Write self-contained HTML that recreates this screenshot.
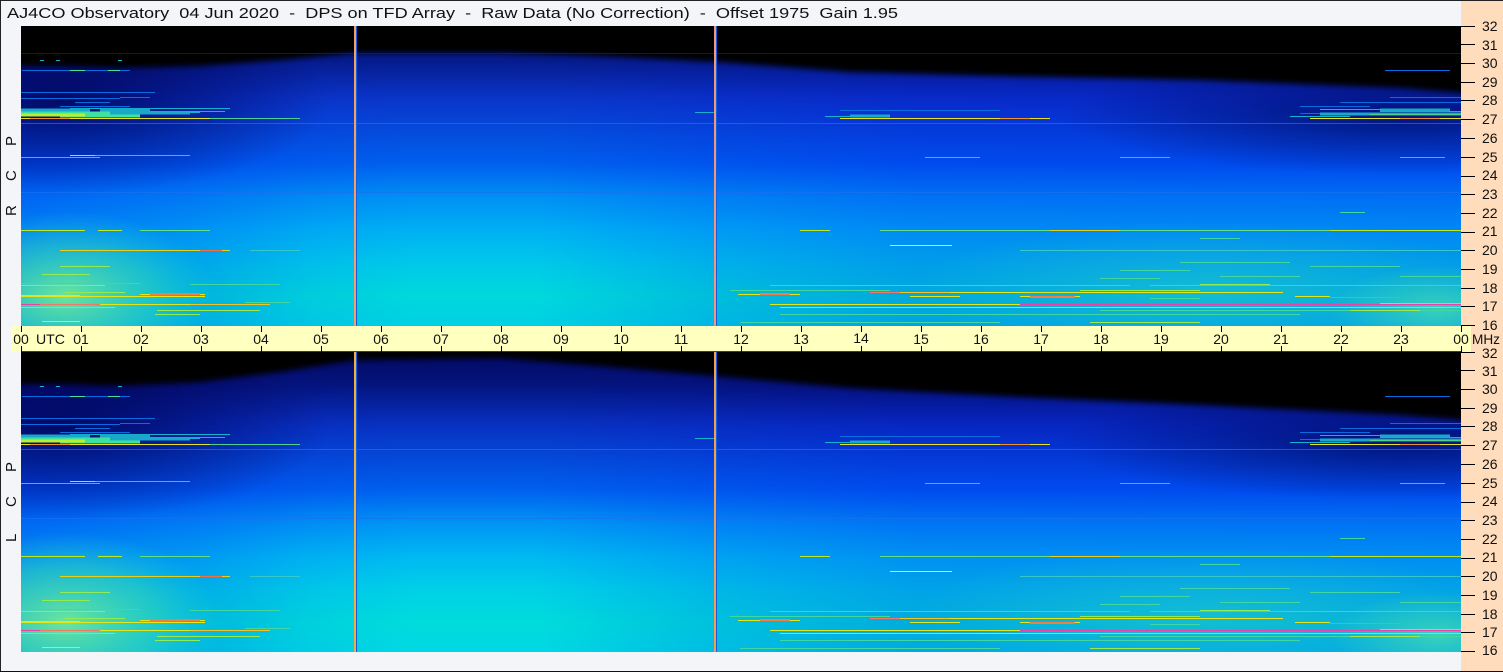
<!DOCTYPE html>
<html><head><meta charset="utf-8"><title>AJ4CO Observatory</title>
<style>
html,body{margin:0;padding:0;background:#f4f5f8;width:1503px;height:672px;overflow:hidden}
svg{display:block}
text{font-family:"Liberation Sans","DejaVu Sans",sans-serif;font-size:14px;fill:#111;white-space:pre}
.mul{mix-blend-mode:multiply}
</style></head><body>
<svg width="1503" height="672" viewBox="0 0 1503 672" xmlns="http://www.w3.org/2000/svg">
<defs>
<linearGradient id="v1" x1="0" y1="0" x2="0" y2="1">
<stop offset="0" stop-color="#030a70"/><stop offset=".11" stop-color="#051a8a"/><stop offset=".24" stop-color="#0a35c8"/><stop offset=".46" stop-color="#0060ee"/><stop offset=".57" stop-color="#0090f4"/><stop offset=".68" stop-color="#00b0f4"/><stop offset=".79" stop-color="#00c8ea"/><stop offset=".9" stop-color="#00d8dc"/><stop offset="1" stop-color="#00d0e4"/>
</linearGradient>
<linearGradient id="v2" x1="0" y1="0" x2="0" y2="1">
<stop offset="0" stop-color="#020860"/><stop offset=".11" stop-color="#04147e"/><stop offset=".24" stop-color="#0830c0"/><stop offset=".46" stop-color="#0060ee"/><stop offset=".57" stop-color="#0094f4"/><stop offset=".68" stop-color="#00b8f2"/><stop offset=".79" stop-color="#00d0e8"/><stop offset=".9" stop-color="#00dcdc"/><stop offset="1" stop-color="#00d8e4"/>
</linearGradient>
<linearGradient id="h" x1="0" y1="0" x2="1" y2="0">
<stop offset="0" stop-color="#b0b4ff"/><stop offset=".12" stop-color="#d0d4ff"/><stop offset=".2" stop-color="#f0f2ff"/><stop offset=".27" stop-color="#fff"/><stop offset=".36" stop-color="#fff"/><stop offset=".48" stop-color="#e0e0ff"/><stop offset=".62" stop-color="#c8c8ff"/><stop offset="1" stop-color="#c4c4ff"/>
</linearGradient>
<radialGradient id="gl1" gradientUnits="userSpaceOnUse" cx="0" cy="0" r="1" gradientTransform="translate(65,296) scale(150,85)"><stop offset="0" stop-color="#80f090" stop-opacity=".85"/><stop offset=".6" stop-color="#40e8b0" stop-opacity=".4"/><stop offset="1" stop-color="#20e0d0" stop-opacity="0"/></radialGradient>
<radialGradient id="gl2" gradientUnits="userSpaceOnUse" cx="0" cy="0" r="1" gradientTransform="translate(65,622) scale(160,90)"><stop offset="0" stop-color="#80f090" stop-opacity=".85"/><stop offset=".6" stop-color="#40e8b0" stop-opacity=".45"/><stop offset="1" stop-color="#20e0d0" stop-opacity="0"/></radialGradient>
<radialGradient id="gr1" gradientUnits="userSpaceOnUse" cx="0" cy="0" r="1" gradientTransform="translate(1210,290) scale(300,70)"><stop offset="0" stop-color="#30e0c0" stop-opacity=".38"/><stop offset="1" stop-color="#30e0c0" stop-opacity="0"/></radialGradient>
<radialGradient id="gr2" gradientUnits="userSpaceOnUse" cx="0" cy="0" r="1" gradientTransform="translate(1210,616) scale(300,70)"><stop offset="0" stop-color="#30e0c0" stop-opacity=".38"/><stop offset="1" stop-color="#30e0c0" stop-opacity="0"/></radialGradient>
<radialGradient id="grr1" gradientUnits="userSpaceOnUse" cx="0" cy="0" r="1" gradientTransform="translate(1440,310) scale(110,45)"><stop offset="0" stop-color="#60f0a0" stop-opacity=".55"/><stop offset="1" stop-color="#60f0a0" stop-opacity="0"/></radialGradient>
<radialGradient id="grr2" gradientUnits="userSpaceOnUse" cx="0" cy="0" r="1" gradientTransform="translate(1440,636) scale(110,45)"><stop offset="0" stop-color="#60f0a0" stop-opacity=".55"/><stop offset="1" stop-color="#60f0a0" stop-opacity="0"/></radialGradient>
<radialGradient id="dl1" gradientUnits="userSpaceOnUse" cx="0" cy="0" r="1" gradientTransform="translate(60,100) scale(270,95)"><stop offset="0" stop-color="#000040" stop-opacity=".72"/><stop offset="1" stop-color="#000040" stop-opacity="0"/></radialGradient>
<radialGradient id="dl2" gradientUnits="userSpaceOnUse" cx="0" cy="0" r="1" gradientTransform="translate(60,426) scale(270,95)"><stop offset="0" stop-color="#000040" stop-opacity=".72"/><stop offset="1" stop-color="#000040" stop-opacity="0"/></radialGradient>
<radialGradient id="dr1" gradientUnits="userSpaceOnUse" cx="0" cy="0" r="1" gradientTransform="translate(1400,115) scale(340,60)"><stop offset="0" stop-color="#000040" stop-opacity=".6"/><stop offset="1" stop-color="#000040" stop-opacity="0"/></radialGradient>
<radialGradient id="dr2" gradientUnits="userSpaceOnUse" cx="0" cy="0" r="1" gradientTransform="translate(1400,441) scale(340,60)"><stop offset="0" stop-color="#000040" stop-opacity=".6"/><stop offset="1" stop-color="#000040" stop-opacity="0"/></radialGradient>
<filter id="b" x="-2%" y="-10%" width="104%" height="120%"><feGaussianBlur stdDeviation="3"/></filter>
<g id="lines" fill="none" stroke-width="1" shape-rendering="crispEdges">
<path stroke="#1a70f0" opacity=".7" d="M21 97.5H1461M21 166.5H1461"/>
<path stroke="#0a6ae0" d="M22 44.5H130M21 66.5H155M21 72.5H120M60 80.5H130M75 76.5H110M120 71.5H150M1340 76.5H1461M1300 80.5H1370M1390 71.5H1461M30 87.5H70M840 84.5H1000M1300 87.5H1461M1385 44.5H1450"/>
<path stroke="#18b0d0" d="M40 34.5H44M56 34.5H60M118 34.5H122M70 82.5H230M90 86.5H200M150 85.5H225M825 90.5H890M1320 83.5H1440M1290 90.5H1350M1380 85.5H1461M695 86.5H714"/>
<path stroke="#40e0a0" d="M70 44.5H85M108 44.5H120"/>
<path stroke="#18a8c8" stroke-width="3" d="M21 84H90M95 87H190M100 84H150M1320 88H1461M1380 84H1450M850 90H890"/>
<path stroke="#40e0a0" stroke-width="3" d="M21 87H110M60 90H140"/>
<path stroke="#b8f030" stroke-width="3" d="M21 89H85"/>
<path stroke="#e8e020" d="M21 92.5H210M840 92.5H1050M1310 92.5H1461"/>
<path stroke="#50d090" d="M210 92.5H300M1370 88.5H1461"/>
<path stroke="#f09030" d="M30 92.5H70M1000 92.5H1030M1400 92.5H1440"/>
<path stroke="#20d0b0" d="M21 131.5H100M70 129.5H190M925 131.5H980M1120 131.5H1170M1400 131.5H1445"/>
<path stroke="#c0e820" d="M70 129.5H95M21 204.5H85M98 204.5H122M800 204.5H830M1330 204.5H1461"/>
<path stroke="#60e080" d="M140 204.5H210M880 204.5H1330"/>
<path stroke="#e8d018" d="M60 224.5H230M1050 204.5H1120"/>
<path stroke="#f07040" d="M200 224.5H222"/>
<path stroke="#38c8c8" d="M1020 224.5H1461M250 224.5H300"/>
<path stroke="#a0f0f0" d="M890 219.5H952"/>
<path stroke="#40d8a0" d="M770 259.5H1130M1150 259.5H1461M730 264.5H890M21 257.5H140M190 258.5H280M245 276.5H290M780 288.5H1300M740 296.5H1000M1100 284.5H1461M1200 212.5H1240M1180 236.5H1290M1120 244.5H1190M1310 240.5H1400M1220 250.5H1300M1340 186.5H1365M1100 252.5H1160M1400 250.5H1461M1150 272.5H1200"/>
<path stroke="#90ec50" d="M21 259.5H105M65 266.5H125M155 288.5H200M1200 258.5H1270M21 281.5H115M1380 277.5H1461M1080 264.5H1200M42 248.5H90M60 240.5H110"/>
<path stroke="#e4e418" stroke-width="2" d="M21 270H80"/>
<path stroke="#e4e418" d="M140 268.5H205M870 266.5H1283M80 270.5H205M738 268.5H800M910 270.5H960M1020 270.5H1080M42 295.5H80M100 278.5H270M1295 270.5H1330M770 278.5H1461M222 284.5H245"/>
<path stroke="#f08040" stroke-width="2" d="M150 268H200M760 268H790M1030 271H1075"/>
<path stroke="#f8c020" d="M190 278.5H270M880 266.5H950"/>
<path stroke="#f040a8" d="M21 278.5H40M1020 278.5H1461"/>
<path stroke="#f07868" d="M40 278.5H100M870 266.5H900M1330 271.5H1400"/>
<path stroke="#a0e848" d="M780 281.5H1461M157 284.5H260M1350 284.5H1420M1090 296.5H1200"/>
</g>
</defs>

<rect width="1503" height="672" fill="#f4f5f8"/>
<rect x="1461" y="0" width="42" height="672" fill="#fedcbc"/>

<!-- panel 1 -->
<svg x="21" y="26" width="1440" height="300" viewBox="21 26 1440 300">
<g style="isolation:isolate">
<rect x="21" y="26" width="1440" height="300" fill="url(#v1)"/>
<rect class="mul" x="21" y="26" width="1440" height="300" fill="url(#h)"/>
</g>
<rect x="21" y="26" width="1440" height="300" fill="url(#dl1)"/>
<rect x="21" y="26" width="1440" height="300" fill="url(#dr1)"/>
<rect x="21" y="26" width="1440" height="300" fill="url(#gl1)"/>
<rect x="21" y="26" width="1440" height="300" fill="url(#gr1)"/>
<rect x="21" y="26" width="1440" height="300" fill="url(#grr1)"/>
<polygon points="12,20 1470,20 1470,98 1461,93 1400,88 1200,80 1000,76 850,72 720,62 600,56 500,53 355,53 280,60 200,66 120,68 60,66 12,66" fill="#000" filter="url(#b)"/>
<path d="M21 53.5H1461" stroke="#0a1a8a" stroke-width="1" shape-rendering="crispEdges" opacity=".8"/>
<use href="#lines" x="0" y="26"/>
</svg>

<!-- panel 2 -->
<svg x="21" y="352" width="1440" height="300" viewBox="21 352 1440 300">
<g style="isolation:isolate">
<rect x="21" y="352" width="1440" height="300" fill="url(#v2)"/>
<rect class="mul" x="21" y="352" width="1440" height="300" fill="url(#h)"/>
</g>
<rect x="21" y="352" width="1440" height="300" fill="url(#dl2)"/>
<rect x="21" y="352" width="1440" height="300" fill="url(#dr2)"/>
<rect x="21" y="352" width="1440" height="300" fill="url(#gl2)"/>
<rect x="21" y="352" width="1440" height="300" fill="url(#gr2)"/>
<rect x="21" y="352" width="1440" height="300" fill="url(#grr2)"/>
<polygon points="12,340 1470,340 1470,425 1461,420 1400,415 1200,405 1000,396 850,388 715,376 600,366 500,358 355,360 280,372 200,382 120,386 60,384 12,384" fill="#000" filter="url(#b)"/>
<use href="#lines" x="0" y="352"/>
</svg>

<!-- vertical markers -->
<g shape-rendering="crispEdges">
<rect x="354" y="26" width="2" height="300" fill="#f0a068"/><rect x="356" y="26" width="1" height="300" fill="#1060e0"/>
<rect x="714" y="26" width="2" height="300" fill="#f0987c"/><rect x="716" y="26" width="1" height="300" fill="#1060e0"/>
<rect x="354" y="352" width="2" height="300" fill="#f0b040"/><rect x="356" y="352" width="1" height="300" fill="#1060e0"/>
<rect x="714" y="352" width="2" height="300" fill="#f0a050"/><rect x="716" y="352" width="1" height="300" fill="#1060e0"/>
</g>

<!-- time band -->
<rect x="11" y="326" width="1460" height="26" fill="#ffffc0"/>
<rect x="21" y="351" width="1440" height="1" fill="#0a40c0"/>
<path shape-rendering="crispEdges" stroke="#000" stroke-width="1" d="M21.5 326V332M21.5 346V352M81.5 326V332M81.5 346V352M141.5 326V332M141.5 346V352M201.5 326V332M201.5 346V352M261.5 326V332M261.5 346V352M321.5 326V332M321.5 346V352M381.5 326V332M381.5 346V352M441.5 326V332M441.5 346V352M501.5 326V332M501.5 346V352M561.5 326V332M561.5 346V352M621.5 326V332M621.5 346V352M681.5 326V332M681.5 346V352M741.5 326V332M741.5 346V352M801.5 326V332M801.5 346V352M861.5 326V332M861.5 346V352M921.5 326V332M921.5 346V352M981.5 326V332M981.5 346V352M1041.5 326V332M1041.5 346V352M1101.5 326V332M1101.5 346V352M1161.5 326V332M1161.5 346V352M1221.5 326V332M1221.5 346V352M1281.5 326V332M1281.5 346V352M1341.5 326V332M1341.5 346V352M1401.5 326V332M1401.5 346V352M1461.5 326V332M1461.5 346V352"/>
<g text-anchor="middle">
<text x="21" y="344">00</text><text x="81" y="344">01</text><text x="141" y="344">02</text><text x="201" y="344">03</text><text x="261" y="344">04</text><text x="321" y="344">05</text><text x="381" y="344">06</text><text x="441" y="344">07</text><text x="501" y="344">08</text><text x="561" y="344">09</text><text x="621" y="344">10</text><text x="681" y="344">11</text><text x="741" y="344">12</text><text x="801" y="344">13</text><text x="861" y="343">14</text><text x="921" y="344">15</text><text x="981" y="344">16</text><text x="1041" y="344">17</text><text x="1101" y="344">18</text><text x="1161" y="344">19</text><text x="1221" y="344">20</text><text x="1281" y="344">21</text><text x="1341" y="344">22</text><text x="1401" y="344">23</text><text x="1461" y="344">00</text>
</g>
<text x="36" y="344" textLength="29" lengthAdjust="spacingAndGlyphs">UTC</text>
<text x="1472" y="344" textLength="28" lengthAdjust="spacingAndGlyphs">MHz</text>

<!-- title -->
<text x="7" y="18" style="font-size:15px" textLength="891" lengthAdjust="spacingAndGlyphs">AJ4CO Observatory  04 Jun 2020  -  DPS on TFD Array  -  Raw Data (No Correction)  -  Offset 1975  Gain 1.95</text>

<!-- rotated labels -->
<g>
<text transform="translate(16,146) rotate(-90)" style="font-size:15px">P</text>
<text transform="translate(16,181) rotate(-90)" style="font-size:15px">C</text>
<text transform="translate(16,216) rotate(-90)" style="font-size:15px">R</text>
<text transform="translate(16,472) rotate(-90)" style="font-size:15px">P</text>
<text transform="translate(16,507) rotate(-90)" style="font-size:15px">C</text>
<text transform="translate(16,542) rotate(-90)" style="font-size:15px">L</text>
</g>

<!-- frequency ticks -->
<path shape-rendering="crispEdges" stroke="#000" stroke-width="1" d="M1461 26.5H1475M1461 44.5H1475M1461 63.5H1475M1461 82.5H1475M1461 100.5H1475M1461 119.5H1475M1461 138.5H1475M1461 157.5H1475M1461 176.5H1475M1461 194.5H1475M1461 213.5H1475M1461 232.5H1475M1461 250.5H1475M1461 269.5H1475M1461 288.5H1475M1461 306.5H1475M1461 325.5H1475M1461 352.5H1475M1461 370.5H1475M1461 389.5H1475M1461 408.5H1475M1461 426.5H1475M1461 445.5H1475M1461 464.5H1475M1461 483.5H1475M1461 502.5H1475M1461 520.5H1475M1461 539.5H1475M1461 558.5H1475M1461 576.5H1475M1461 595.5H1475M1461 614.5H1475M1461 632.5H1475M1461 651.5H1475"/>
<g>
<text x="1482" y="31">32</text><text x="1482" y="50">31</text><text x="1482" y="68">30</text><text x="1482" y="87">29</text><text x="1482" y="105">28</text><text x="1482" y="124">27</text><text x="1482" y="143">26</text><text x="1482" y="162">25</text><text x="1482" y="180">24</text><text x="1482" y="199">23</text><text x="1482" y="218">22</text><text x="1482" y="236">21</text><text x="1482" y="255">20</text><text x="1482" y="274">19</text><text x="1482" y="293">18</text><text x="1482" y="311">17</text><text x="1482" y="330">16</text>
<text x="1482" y="358">32</text><text x="1482" y="376">31</text><text x="1482" y="394">30</text><text x="1482" y="413">29</text><text x="1482" y="431">28</text><text x="1482" y="450">27</text><text x="1482" y="469">26</text><text x="1482" y="488">25</text><text x="1482" y="506">24</text><text x="1482" y="525">23</text><text x="1482" y="544">22</text><text x="1482" y="562">21</text><text x="1482" y="581">20</text><text x="1482" y="600">19</text><text x="1482" y="619">18</text><text x="1482" y="637">17</text><text x="1482" y="655">16</text>
</g>

<rect x="0" y="0" width="1503" height="1" fill="#222"/>
<rect x="0" y="0" width="1" height="672" fill="#222"/>
<rect x="0" y="671" width="1503" height="1" fill="#111"/>
</svg>
</body></html>
